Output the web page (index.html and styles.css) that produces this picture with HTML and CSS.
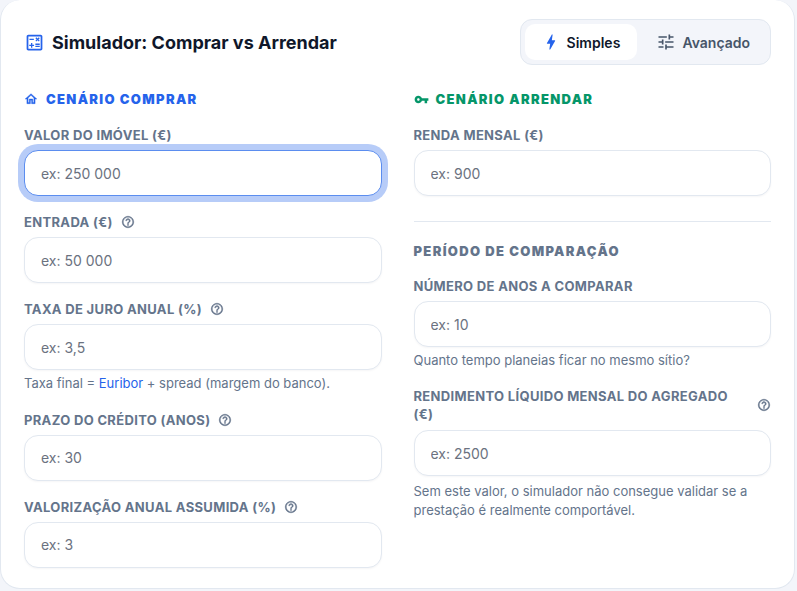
FILE: index.html
```html
<!DOCTYPE html>
<html lang="pt">
<head>
    <meta charset="utf-8">
    <title>Simulador: Comprar vs Arrendar</title>
    <link rel="stylesheet" href="styles.css">
</head>
<body>
    <svg class="icon-defs" aria-hidden="true">
        <symbol id="icon-help" viewBox="0 0 24 24">
            <path d="M11 18h2v-2h-2v2zm1-16C6.48 2 2 6.48 2 12s4.48 10 10 10 10-4.48 10-10S17.52 2 12 2zm0 18c-4.41 0-8-3.59-8-8s3.59-8 8-8 8 3.59 8 8-3.59 8-8 8zm0-14c-2.21 0-4 1.79-4 4h2c0-1.1.9-2 2-2s2 .9 2 2c0 2-3 1.75-3 5h2c0-2.25 3-2.5 3-5 0-2.21-1.79-4-4-4z"/>
        </symbol>
    </svg>

    <div class="card">
        <div class="card-header">
            <h1 class="title">
                <svg class="title-icon" viewBox="0 0 24 24"><path d="M19 3H5c-1.1 0-2 .9-2 2v14c0 1.1.9 2 2 2h14c1.1 0 2-.9 2-2V5c0-1.1-.9-2-2-2zm0 16H5V5h14v14zM6.25 7.72h5v1.5h-5zM13 15.75h5v1.5h-5zM13 13.25h5v1.5h-5zM8 18h1.5v-2h2v-1.5h-2v-2H8v2H6V16h2zM14.09 10.95l1.41-1.41 1.41 1.41 1.06-1.06-1.41-1.42 1.41-1.41L16.91 6 15.5 7.41 14.09 6l-1.06 1.06 1.41 1.41-1.41 1.42z"/></svg>
                Simulador: Comprar vs Arrendar
            </h1>
            <div class="mode-toggle">
                <button type="button" class="mode-btn active">
                    <svg class="mode-icon bolt" viewBox="0 0 24 24"><path d="M11 21h-1l1-7H7.5c-.58 0-.57-.32-.38-.66.19-.34.05-.08.07-.12C8.48 10.94 10.42 7.54 13 3h1l-1 7h3.5c.49 0 .56.33.47.51l-.07.15C12.96 17.55 11 21 11 21z"/></svg>
                    Simples
                </button>
                <button type="button" class="mode-btn">
                    <svg class="mode-icon" viewBox="0 0 24 24"><path d="M3 17v2h6v-2H3zM3 5v2h10V5H3zm10 16v-2h8v-2h-8v-2h-2v6h2zM7 9v2H3v2h4v2h2V9H7zm14 4v-2H11v2h10zm-6-4h2V7h4V5h-4V3h-2v6z"/></svg>
                    Avançado
                </button>
            </div>
        </div>

        <div class="columns">
            <div class="column">
                <h2 class="section-title buy">
                    <svg class="section-icon" viewBox="0 0 24 24"><path d="M12 5.69l5 4.5V18h-2v-6H9v6H7v-7.81l5-4.5M12 3L2 12h3v8h6v-6h2v6h6v-8h3L12 3z"/></svg>
                    Cenário Comprar
                </h2>
                <div class="field">
                    <label for="valor">Valor do imóvel (€)</label>
                    <input type="text" id="valor" class="focused" placeholder="ex: 250 000">
                </div>
                <div class="field">
                    <label for="entrada">Entrada (€) <svg class="help"><use href="#icon-help"/></svg></label>
                    <input type="text" id="entrada" placeholder="ex: 50 000">
                </div>
                <div class="field">
                    <label for="taxa">Taxa de juro anual (%) <svg class="help"><use href="#icon-help"/></svg></label>
                    <input type="text" id="taxa" placeholder="ex: 3,5">
                    <p class="hint">Taxa final = <a href="#">Euribor</a> + spread (margem do banco).</p>
                </div>
                <div class="field">
                    <label for="prazo">Prazo do crédito (anos) <svg class="help"><use href="#icon-help"/></svg></label>
                    <input type="text" id="prazo" placeholder="ex: 30">
                </div>
                <div class="field">
                    <label for="valorizacao">Valorização anual assumida (%) <svg class="help"><use href="#icon-help"/></svg></label>
                    <input type="text" id="valorizacao" placeholder="ex: 3">
                </div>
            </div>

            <div class="column">
                <h2 class="section-title rent">
                    <svg class="section-icon key" viewBox="0 0 24 24"><path fill-rule="evenodd" d="M12.65 10C11.83 7.67 9.61 6 7 6c-3.31 0-6 2.69-6 6s2.69 6 6 6c2.61 0 4.83-1.67 5.65-4H17v4h4v-4h2v-4H12.65zM7 14c-1.1 0-2-.9-2-2s.9-2 2-2 2 .9 2 2-.9 2-2 2z"/></svg>
                    Cenário Arrendar
                </h2>
                <div class="field">
                    <label for="renda">Renda mensal (€)</label>
                    <input type="text" id="renda" placeholder="ex: 900">
                </div>
                <hr class="divider">
                <h2 class="section-title period">Período de comparação</h2>
                <div class="field">
                    <label for="anos">Número de anos a comparar</label>
                    <input type="text" id="anos" placeholder="ex: 10">
                    <p class="hint">Quanto tempo planeias ficar no mesmo sítio?</p>
                </div>
                <div class="field wrapped">
                    <label for="rendimento">Rendimento líquido mensal do agregado (€) <svg class="help"><use href="#icon-help"/></svg></label>
                    <input type="text" id="rendimento" placeholder="ex: 2500">
                    <p class="hint">Sem este valor, o simulador não consegue validar se a prestação é realmente comportável.</p>
                </div>
            </div>
        </div>
    </div>
</body>
</html>
```

FILE: styles.css
```css
* {
    box-sizing: border-box;
}
html, body {
    height: 100%;
}
body {
    margin: 0;
    padding-right: 2px;
    overflow: hidden;
    font-family: Inter, "Liberation Sans", sans-serif;
    background-color: #f3f5fa;
    color: #0f172a;
}
.icon-defs {
    display: none;
}
.card {
    height: 589px;
    padding: 19px 23px 0;
    background-color: white;
    border: 1px solid #e2e8f0;
    border-top: none;
    border-radius: 20px;
}
.card-header {
    display: flex;
    justify-content: space-between;
    align-items: center;
    margin-bottom: 25px;
}
.title {
    display: flex;
    align-items: center;
    gap: 7px;
    margin: 0;
    font-size: 18px;
    font-weight: 700;
    color: #0f172a;
}
.title-icon {
    width: 21px;
    height: 21px;
    fill: #2563eb;
}
.mode-toggle {
    display: flex;
    gap: 3px;
    padding: 4px;
    background-color: #f3f5fa;
    border: 1px solid #e2e8f0;
    border-radius: 12px;
}
.mode-btn {
    display: flex;
    align-items: center;
    justify-content: center;
    gap: 6px;
    height: 36px;
    padding: 0 16px;
    border: none;
    border-radius: 10px;
    background: none;
    font-family: inherit;
    font-size: 14px;
    font-weight: 600;
    color: #475569;
}
.mode-btn.active {
    width: 112px;
    padding: 0 17px 0 15px;
    background-color: white;
    color: #0f172a;
}
.mode-icon {
    width: 20px;
    height: 20px;
    fill: #475569;
}
.mode-icon.bolt {
    fill: #2563eb;
}
.columns {
    display: grid;
    grid-template-columns: 1fr 1fr;
    gap: 32px;
}
.section-title {
    display: flex;
    align-items: center;
    gap: 8px;
    margin: 0 0 18px;
    font-size: 13px;
    line-height: 18px;
    font-weight: 900;
    letter-spacing: 1.33px;
    text-transform: uppercase;
}
.section-title.buy {
    color: #2563eb;
    fill: #2563eb;
    stroke: #2563eb;
    stroke-width: 0.7;
}
.section-title.rent {
    color: #059669;
    fill: #059669;
}
.section-title.period {
    margin-bottom: 17px;
    color: #64748b;
}
.section-icon {
    width: 14px;
    height: 14px;
}
.section-icon.key {
    width: 15px;
    height: 15px;
    margin-right: -1px;
}
.field {
    margin-bottom: 17.2px;
}
.field label {
    display: flex;
    align-items: center;
    gap: 8px;
    margin-bottom: 6px;
    font-size: 13px;
    line-height: 18px;
    font-weight: 700;
    letter-spacing: 0.33px;
    color: #64748b;
    text-transform: uppercase;
}
.field.wrapped label {
    margin-bottom: 7px;
}
.field.wrapped .hint {
    margin-top: 6px;
}
.help {
    flex-shrink: 0;
    width: 14px;
    height: 14px;
    fill: #64748b;
    stroke: #64748b;
    stroke-width: 0.6;
}
input[type="text"] {
    display: block;
    width: 100%;
    height: 46px;
    padding: 0 16px;
    background-color: white;
    border: 1px solid #e2e8f0;
    border-radius: 14px;
    box-shadow: 0 1px 2px rgba(15,23,42,0.04);
    font-family: inherit;
    font-size: 14px;
    color: #0f172a;
    outline: none;
}
input[type="text"]::placeholder {
    color: #6b7280;
}
input.focused[type="text"] {
    border-color: #5b8def;
    box-shadow: 0 0 0 6px rgba(37,99,235,0.33);
}
.hint {
    margin: 4px 0 0;
    font-size: 13px;
    line-height: 19px;
    color: #64748b;
}
.hint a {
    color: #2563eb;
    text-decoration: none;
}
.divider {
    margin: 25px 0 20px;
    border: none;
    border-top: 1px solid #e2e8f0;
}
```
